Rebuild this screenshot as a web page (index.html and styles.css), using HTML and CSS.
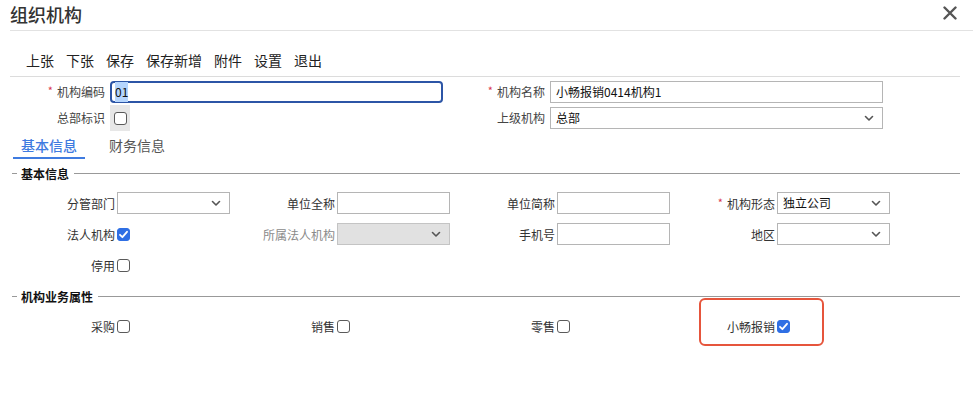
FILE: index.html
```html
<!DOCTYPE html>
<html lang="zh">
<head>
<meta charset="utf-8">
<title>组织机构</title>
<link rel="stylesheet" href="styles.css">
</head>
<body>
<div class="dialog">
  <div class="header">
    <div class="title">组织机构</div>
    <svg class="close" width="14" height="14" viewBox="0 0 14 14"><path d="M1.5 1.5 L12.5 12.5 M12.5 1.5 L1.5 12.5" stroke="#555" stroke-width="2.4" stroke-linecap="round"/></svg>
  </div>
  <div class="content">
    <div class="toolbar">
      <span>上张</span><span>下张</span><span>保存</span><span>保存新增</span><span>附件</span><span>设置</span><span>退出</span>
    </div>
    <div class="topform">
      <div class="tcell">
        <label class="tlabel"><i class="req">*</i>机构编码</label>
        <div class="input wide focus"><span class="sel">01</span></div>
      </div>
      <div class="tcell">
        <label class="tlabel"><i class="req">*</i>机构名称</label>
        <div class="input wide">小畅报销0414机构1</div>
      </div>
      <div class="tcell">
        <label class="tlabel">总部标识</label>
        <span class="cbwrap"><span class="cb"></span></span>
      </div>
      <div class="tcell">
        <label class="tlabel">上级机构</label>
        <div class="input wide select">总部<svg class="chev" width="10" height="7" viewBox="0 0 10 7"><path d="M1.5 1.5 L5 5 L8.5 1.5" fill="none" stroke="#555" stroke-width="1.6" stroke-linecap="round" stroke-linejoin="round"/></svg></div>
      </div>
    </div>
    <div class="tabs">
      <div class="tab active">基本信息</div>
      <div class="tab">财务信息</div>
    </div>
    <div class="legend"><span class="dash"></span><span class="ltext">基本信息</span><span class="lline"></span></div>
    <div class="grid">
      <div class="cell"><label class="lab">分管部门</label><div class="input select"><span></span><svg class="chev" width="10" height="7" viewBox="0 0 10 7"><path d="M1.5 1.5 L5 5 L8.5 1.5" fill="none" stroke="#555" stroke-width="1.6" stroke-linecap="round" stroke-linejoin="round"/></svg></div></div>
      <div class="cell"><label class="lab">单位全称</label><div class="input"></div></div>
      <div class="cell"><label class="lab">单位简称</label><div class="input"></div></div>
      <div class="cell"><label class="lab"><i class="req">*</i>机构形态</label><div class="input select"><span>独立公司</span><svg class="chev" width="10" height="7" viewBox="0 0 10 7"><path d="M1.5 1.5 L5 5 L8.5 1.5" fill="none" stroke="#555" stroke-width="1.6" stroke-linecap="round" stroke-linejoin="round"/></svg></div></div>

      <div class="cell"><label class="lab">法人机构</label><span class="cb checked"><svg width="13" height="13" viewBox="0 0 13 13"><path d="M3 6.8 L5.4 9.2 L10 3.8" fill="none" stroke="#fff" stroke-width="1.8" stroke-linecap="round" stroke-linejoin="round"/></svg></span></div>
      <div class="cell"><label class="lab muted">所属法人机构</label><div class="input select disabled"><span></span><svg class="chev" width="10" height="7" viewBox="0 0 10 7"><path d="M1.5 1.5 L5 5 L8.5 1.5" fill="none" stroke="#555" stroke-width="1.6" stroke-linecap="round" stroke-linejoin="round"/></svg></div></div>
      <div class="cell"><label class="lab">手机号</label><div class="input"></div></div>
      <div class="cell"><label class="lab">地区</label><div class="input select"><span></span><svg class="chev" width="10" height="7" viewBox="0 0 10 7"><path d="M1.5 1.5 L5 5 L8.5 1.5" fill="none" stroke="#555" stroke-width="1.6" stroke-linecap="round" stroke-linejoin="round"/></svg></div></div>

      <div class="cell"><label class="lab">停用</label><span class="cb"></span></div>
    </div>
    <div class="legend legend2"><span class="dash"></span><span class="ltext">机构业务属性</span><span class="lline"></span></div>
    <div class="grid grid2">
      <div class="cell"><label class="lab">采购</label><span class="cb"></span></div>
      <div class="cell"><label class="lab">销售</label><span class="cb"></span></div>
      <div class="cell"><label class="lab">零售</label><span class="cb"></span></div>
      <div class="cell marked"><label class="lab">小畅报销</label><span class="cb checked"><svg width="13" height="13" viewBox="0 0 13 13"><path d="M3 6.8 L5.4 9.2 L10 3.8" fill="none" stroke="#fff" stroke-width="1.8" stroke-linecap="round" stroke-linejoin="round"/></svg></span><span class="highlight"></span></div>
    </div>
  </div>
</div>
</body>
</html>
```

FILE: styles.css
```css
* { box-sizing: border-box; }
body {
  margin: 0;
  background: #fff;
  font-family: "Noto Sans CJK SC", "Noto Sans", sans-serif;
  color: #333;
  font-size: 12px;
}
.dialog { width: 973px; height: 397px; }
.header {
  margin-left: 10px;
  height: 31px;
  border-bottom: 1px solid #e2e2e2;
  display: flex;
  align-items: flex-start;
  justify-content: space-between;
}
.title {
  font-size: 18px;
  font-weight: 500;
  line-height: 28px;
  color: #333;
}
.close { margin: 6px 16px 0 0; }
.content { padding: 0 13px 0 10px; }
.toolbar {
  display: flex;
  gap: 12px;
  padding: 20px 0 7px 16px;
  border-bottom: 1px solid #dcdcdc;
  font-size: 14px;
  line-height: 18px;
  color: #222;
}
.topform {
  display: grid;
  grid-template-columns: 440px 440px;
  row-gap: 4px;
  margin-top: 4px;
}
.tcell { display: flex; align-items: center; height: 22px; }
.tlabel {
  width: 95px;
  margin-right: 5px;
  text-align: right;
  color: #444;
  line-height: 22px;
  white-space: nowrap;
}
.req {
  font-style: normal;
  color: #d9364f;
  margin-right: 4px;
  font-size: 11px;
  position: relative;
  top: -2px;
}
.input {
  width: 113px;
  height: 22px;
  border: 1px solid #b5b5b5;
  background: #fff;
  display: flex;
  align-items: center;
  padding: 0 5px;
  font-size: 12px;
  color: #111;
  line-height: 20px;
}
.input.wide { width: 333px; }
.input.focus {
  border: 2px solid #2c55a6;
  border-radius: 4px;
  padding: 0 3px;
}
.sel { background: #b5d5fd; }
.select { justify-content: space-between; padding-right: 8px; }
.chev { flex: none; }
.input.disabled { background: #e1e1e1; border-color: #c4c4c4; }
.cbwrap {
  background: #e7e7e7;
  width: 20px;
  height: 26px;
  display: flex;
  align-items: center;
  justify-content: center;
}
.cb {
  width: 13px;
  height: 13px;
  border: 1px solid #5a5a5a;
  border-radius: 3px;
  background: #fff;
  display: inline-flex;
  flex: none;
}
.cb.checked { background: #2f6fe4; border-color: #2f6fe4; }
.cb.checked svg { margin: -1px; }
.tabs {
  display: flex;
  gap: 16px;
  margin: 4px 0 0 3px;
}
.tab {
  font-size: 14px;
  line-height: 18px;
  padding: 3px 8px 3px;
  border-bottom: 2px solid transparent;
  color: #555;
}
.tab.active { color: #3f7be0; border-bottom-color: #3f7be0; font-weight: 500; }
.legend {
  display: flex;
  align-items: center;
  height: 16px;
  margin-top: 6px;
}
.dash { width: 5px; height: 1px; background: #999; margin: 0 4px 0 2px; }
.ltext { font-weight: 700; color: #111; font-size: 12px; margin-right: 5px; }
.lline { flex: 1; height: 1px; background: #999; }
.legend2 { margin-top: 12px; }
.grid {
  display: grid;
  grid-template-columns: repeat(4, 220px);
  row-gap: 9px;
  margin-top: 11px;
}
.grid2 { margin-top: 11px; }
.cell { display: flex; align-items: center; height: 22px; position: relative; }
.lab {
  width: 105px;
  margin-right: 2px;
  text-align: right;
  white-space: nowrap;
  color: #333;
}
.lab.muted { color: #8a8a8a; }
.highlight {
  position: absolute;
  left: 29px;
  top: -17px;
  width: 125px;
  height: 48px;
  border: 2px solid #e6553c;
  border-radius: 6px;
}
```
